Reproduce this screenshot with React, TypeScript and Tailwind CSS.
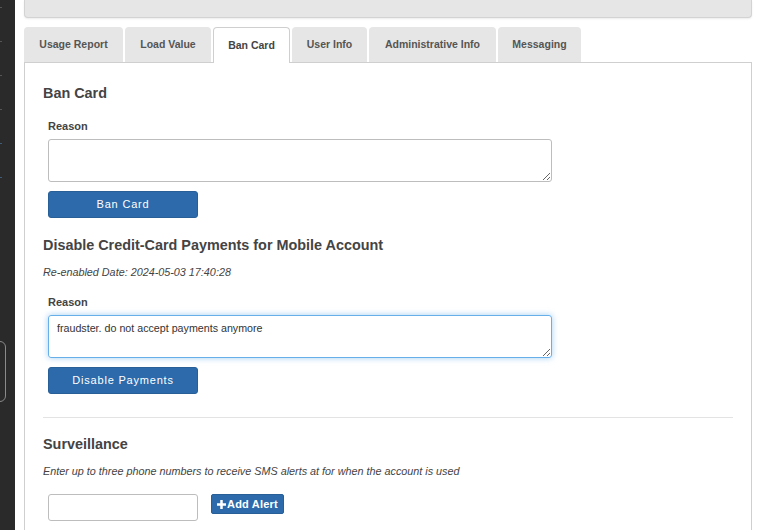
import { useState } from 'react';

const TABS: { label: string; width: number }[] = [
  { label: 'Usage Report', width: 99 },
  { label: 'Load Value', width: 86 },
  { label: 'Ban Card', width: 77 },
  { label: 'User Info', width: 75 },
  { label: 'Administrative Info', width: 127 },
  { label: 'Messaging', width: 83 },
];
const ACTIVE_TAB = 'Ban Card';

const FONT = { fontFamily: '"Liberation Sans", Arial, sans-serif' };

function SideStrip() {
  return (
    <div className="flex w-[15px] shrink-0 flex-col bg-[#2a2a2a]">
      <div className="flex flex-col gap-[33px] pt-[7px]">
        {['#555', '#555', '#555', '#555', '#3f5d7a', '#3f5d7a'].map((c, i) => (
          <span key={i} className="block h-px w-[2px]" style={{ backgroundColor: c }} />
        ))}
      </div>
      <div className="ml-[-12px] mt-[163px] h-[61px] w-[18px] rounded-[6px] border border-[#8a8a8a]" />
    </div>
  );
}

function SectionTitle({ children, className = '' }: { children: string; className?: string }) {
  return <h3 className={`h-[20px] text-[14.4px] font-bold leading-[20px] text-[#444] ${className}`}>{children}</h3>;
}

function PrimaryButton({ children, className = '' }: { children: string; className?: string }) {
  return (
    <button
      type="button"
      className={`ml-[5px] flex h-[27px] w-[150px] items-center justify-center rounded-[3px] border border-[#285f97] bg-[#2c6aab] text-[11px] tracking-[0.8px] text-white ${className}`}
    >
      {children}
    </button>
  );
}

export default function App() {
  const [banReason, setBanReason] = useState('');
  const [disableReason, setDisableReason] = useState('fraudster. do not accept payments anymore');
  const [phone, setPhone] = useState('');

  return (
    <div className="flex h-[530px] w-[773px] overflow-hidden bg-white" style={FONT}>
      <SideStrip />

      <div className="ml-[9px] flex w-[728px] flex-col">
        <div className="h-[18px] rounded-b-[4px] border-x border-b border-[#d3d3d3] bg-[#e6e6e6] shadow-[0_1px_2px_rgba(0,0,0,0.08)]" />

        <ul className="mt-[9px] flex gap-[2px]">
          {TABS.map((tab) => {
            const active = tab.label === ACTIVE_TAB;
            return (
              <li
                key={tab.label}
                style={{ width: tab.width }}
                className={
                  active
                    ? 'relative z-10 -mb-px flex h-[36px] items-center justify-center rounded-t-[4px] border border-b-0 border-[#cfcfcf] bg-white text-[10.5px] font-bold text-[#444]'
                    : 'flex h-[35px] items-center justify-center rounded-t-[4px] bg-[#e6e6e6] text-[10.5px] font-bold text-[#555]'
                }
              >
                {tab.label}
              </li>
            );
          })}
        </ul>

        <div className="flex flex-1 flex-col border-x border-t border-[#cfcfcf] px-[18px] pt-[20px]">
          <SectionTitle>Ban Card</SectionTitle>
          <label className="ml-[5px] mt-[16px] block text-[11px] font-bold leading-[15px] text-[#444]">Reason</label>
          <textarea
            value={banReason}
            onChange={(e) => setBanReason(e.target.value)}
            className="ml-[5px] mt-[5px] h-[43px] w-[504px] rounded-[3px] border border-[#bdbdbd] px-[9px] py-[5px] text-[11px] text-[#333] outline-none"
          />
          <PrimaryButton className="mt-[9px]">Ban Card</PrimaryButton>

          <SectionTitle className="mt-[17px]">Disable Credit-Card Payments for Mobile Account</SectionTitle>
          <p className="mt-[10px] text-[10.8px] italic leading-[15px] text-[#444]">Re-enabled Date: 2024-05-03 17:40:28</p>
          <label className="ml-[5px] mt-[15px] block text-[11px] font-bold leading-[15px] text-[#444]">Reason</label>
          <textarea
            value={disableReason}
            onChange={(e) => setDisableReason(e.target.value)}
            className="ml-[5px] mt-[5px] h-[43px] w-[504px] rounded-[3px] border border-[#66afe9] px-[8px] py-[5px] text-[10.7px] leading-[14px] text-[#333] shadow-[0_0_6px_rgba(102,175,233,0.6)] outline-none"
          />
          <PrimaryButton className="mt-[9px]">Disable Payments</PrimaryButton>

          <hr className="mt-[23px] border-t border-[#e3e3e3]" />

          <SectionTitle className="mt-[16px]">Surveillance</SectionTitle>
          <p className="mt-[10px] text-[10.8px] italic leading-[15px] text-[#444]">
            Enter up to three phone numbers to receive SMS alerts at for when the account is used
          </p>
          <div className="ml-[5px] mt-[15px] flex items-start gap-[13px]">
            <input
              value={phone}
              onChange={(e) => setPhone(e.target.value)}
              className="h-[27px] w-[150px] rounded-[3px] border border-[#bdbdbd] px-[8px] text-[11px] outline-none"
            />
            <button
              type="button"
              className="flex h-[20px] items-center gap-[1px] rounded-[2px] border border-[#285f97] bg-[#2c6aab] px-[5px] text-[11px] font-bold tracking-[0.2px] text-white"
            >
              <svg width="9" height="9" viewBox="0 0 9 9" aria-hidden="true">
                <path d="M3.25 0h2.5v3.25H9v2.5H5.75V9h-2.5V5.75H0v-2.5h3.25z" fill="currentColor" />
              </svg>
              Add Alert
            </button>
          </div>
        </div>
      </div>
    </div>
  );
}
